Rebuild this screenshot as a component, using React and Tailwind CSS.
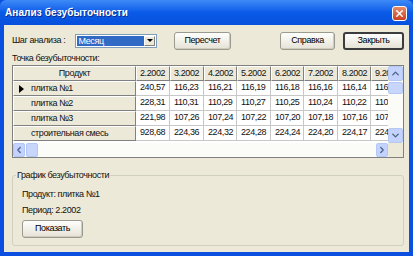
import { ChevronUp, ChevronDown, ChevronLeft, ChevronRight, X } from 'lucide-react';

const dates = ['2.2002', '3.2002', '4.2002', '5.2002', '6.2002', '7.2002', '8.2002', '9.2002'];
const widths = ['w-[34px]', 'w-[34px]', 'w-[33px]', 'w-[34px]', 'w-[33px]', 'w-[34px]', 'w-[33px]', 'w-[34px]'];

const rows = [
  { name: 'плитка №1', values: ['240,57', '116,23', '116,21', '116,19', '116,18', '116,16', '116,14', '116,12'], current: true },
  { name: 'плитка №2', values: ['228,31', '110,31', '110,29', '110,27', '110,25', '110,24', '110,22', '110,20'] },
  { name: 'плитка №3', values: ['221,98', '107,26', '107,24', '107,22', '107,20', '107,18', '107,16', '107,14'] },
  { name: 'строительная смесь', values: ['928,68', '224,36', '224,32', '224,28', '224,24', '224,20', '224,17', '224,13'] },
];

const bevel = 'border-t border-l border-t-white border-l-white border-b border-r border-b-[#808080] border-r-[#808080]';

const XpButton = ({ children, width, isDefault }) => (
  <div
    className={`${width} h-[18px] flex items-center justify-center rounded-[3px] bg-gradient-to-b from-[#fefefd] to-[#e6e3d6] text-black ${
      isDefault ? 'border-2 border-[#3c3c3c]' : 'border border-[#9a9a8f] shadow-[inset_-1px_-1px_0_#cfcbbd]'
    }`}
  >
    {children}
  </div>
);

const ScrollArrow = ({ children, className = '' }) => (
  <div className={`flex items-center justify-center rounded-[2px] bg-[#c3d3fd] border border-[#b4c8f6] text-[#4d6185] ${className}`}>
    {children}
  </div>
);

export default function App() {
  return (
    <div className="w-[413px] h-[256px] flex flex-col bg-[#0a4fe0] overflow-hidden" style={{ fontFamily: '"Liberation Sans", Arial, sans-serif' }}>
      {/* Title bar */}
      <div className="h-[25px] shrink-0 flex items-center justify-between pl-[5px] pr-[6px] bg-gradient-to-b from-[#3d8af7] via-[#0a5ae8] to-[#0750dc] rounded-t-[6px]">
        <span className="text-white font-bold text-[10px] tracking-[0.1px] [text-shadow:1px_1px_0_#0b2a8a]">Анализ безубыточности</span>
        <div className="w-[15px] h-[15px] mt-[2px] rounded-[3px] border border-white bg-gradient-to-b from-[#e88a6a] to-[#c8401c] flex items-center justify-center">
          <X size={11} strokeWidth={3} className="text-white" />
        </div>
      </div>

      {/* Body */}
      <div className="flex-1 mx-[4px] mb-[4px] bg-[#ece9d8] pl-[8px] pr-[5px] pt-[6px] flex flex-col text-[9px] tracking-[-0.4px] text-[#111]">
        {/* Top row */}
        <div className="flex items-center h-[19px]">
          <span className="w-[63px] whitespace-nowrap">Шаг анализа :</span>
          <div className="w-[83px] h-[14px] border border-[#7f9db9] bg-white flex items-stretch p-[1px]">
            <div className="flex-1 bg-[#316ac5] text-white leading-[10px] pl-[2px]">Месяц</div>
            <div className={`w-[11px] bg-[#ece9d8] flex items-center justify-center ${bevel}`}>
              <div className="w-0 h-0 border-l-[3px] border-r-[3px] border-t-[3px] border-l-transparent border-r-transparent border-t-black" />
            </div>
          </div>
          <div className="ml-[17px]">
            <XpButton width="w-[57px]">Пересчет</XpButton>
          </div>
          <div className="ml-[49px]">
            <XpButton width="w-[55px]">Справка</XpButton>
          </div>
          <div className="ml-[8px]">
            <XpButton width="w-[61px]" isDefault>Закрыть</XpButton>
          </div>
        </div>

        <div className="mt-[1px] h-[14px] leading-[14px]">Точка безубыточности:</div>

        {/* Grid */}
        <div className="w-[392px] h-[93px] border border-[#808080] bg-white flex flex-col">
          <div className="flex flex-1 min-h-0">
            <div className="flex-1 overflow-hidden">
              <div className="flex h-[15px]">
                <div className={`w-[123px] shrink-0 bg-[#ece9d8] ${bevel} flex items-center justify-center`}>Продукт</div>
                {dates.map((d, i) => (
                  <div key={d} className={`${widths[i]} shrink-0 bg-[#ece9d8] ${bevel} flex items-center pl-[3px] whitespace-nowrap overflow-hidden`}>
                    {d}
                  </div>
                ))}
              </div>
              {rows.map((r) => (
                <div key={r.name} className="flex h-[15px]">
                  <div className={`w-[123px] shrink-0 bg-[#ece9d8] ${bevel} flex items-center`}>
                    <div className="w-[14px] flex items-center justify-center">
                      {r.current && (
                        <div className="w-0 h-0 border-t-[4px] border-b-[4px] border-l-[5px] border-t-transparent border-b-transparent border-l-black" />
                      )}
                    </div>
                    <span className="ml-[3px]">{r.name}</span>
                  </div>
                  {r.values.map((v, i) => (
                    <div key={i} className={`${widths[i]} shrink-0 border-r border-b border-[#c8c8c8] flex items-center pl-[4px] whitespace-nowrap overflow-hidden`}>
                      {v}
                    </div>
                  ))}
                </div>
              ))}
            </div>
            {/* Vertical scrollbar */}
            <div className="w-[15px] shrink-0 bg-[#fbfbf8] flex flex-col">
              <ScrollArrow className="h-[15px]">
                <ChevronUp size={11} strokeWidth={3} />
              </ScrollArrow>
              <div className="h-[12px] mt-[1px] rounded-[2px] bg-[#c8d6fb] border border-[#b4c8f6]" />
              <div className="flex-1" />
              <ScrollArrow className="h-[15px]">
                <ChevronDown size={11} strokeWidth={3} />
              </ScrollArrow>
            </div>
          </div>
          {/* Horizontal scrollbar */}
          <div className="h-[14px] shrink-0 flex">
            <div className="flex-1 bg-[#fbfbf8] flex">
              <ScrollArrow className="w-[12px]">
                <ChevronLeft size={10} strokeWidth={3} />
              </ScrollArrow>
              <div className="w-[12px] ml-[1px] rounded-[2px] bg-[#c8d6fb] border border-[#b4c8f6]" />
              <div className="flex-1" />
              <ScrollArrow className="w-[12px]">
                <ChevronRight size={10} strokeWidth={3} />
              </ScrollArrow>
            </div>
            <div className="w-[15px] bg-[#ece9d8]" />
          </div>
        </div>

        {/* Group box */}
        <div className="relative mt-[17px] w-[392px] h-[71px] border border-[#d0d0bf] rounded-[3px] pl-[9px] pt-[12px]">
          <span className="absolute -top-[7px] left-[3px] bg-[#ece9d8] px-[1px] leading-[12px]">График безубыточности</span>
          <div className="leading-[12px]">Продукт: плитка №1</div>
          <div className="leading-[12px] mt-[4px]">Период: 2.2002</div>
          <div className="mt-[4px]">
            <XpButton width="w-[61px]">Показать</XpButton>
          </div>
        </div>
      </div>
    </div>
  );
}
